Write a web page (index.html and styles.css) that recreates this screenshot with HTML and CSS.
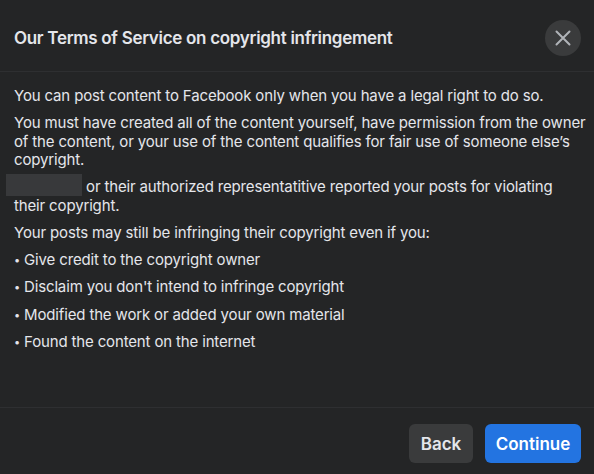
FILE: index.html
```html
<!DOCTYPE html>
<html lang="en">
<head>
    <meta charset="UTF-8">
    <meta name="viewport" content="width=device-width, initial-scale=1.0">
    <title>Copyright infringement</title>
    <link rel="stylesheet" href="styles.css">
</head>
<body>
    <div class="dialog">
        <div class="dialog-header">
            <h2>Our Terms of Service on copyright infringement</h2>
            <button class="close-button" aria-label="Close">
                <svg width="18" height="18" viewBox="0 0 18 18">
                    <path d="M2.5 2.5 L15.5 15.5 M15.5 2.5 L2.5 15.5" stroke="#b0b3b8" stroke-width="2" stroke-linecap="round" fill="none"/>
                </svg>
            </button>
        </div>

        <div class="dialog-body">
            <p>You can post content to Facebook only when you have a legal right to do so.</p>
            <p>You must have created all of the content yourself, have permission from the owner<br>of the content, or your use of the content qualifies for fair use of someone else’s<br>copyright.</p>
            <p><span class="redacted"></span> or their authorized representatitive reported your posts for violating<br>their copyright.</p>
            <p>Your posts may still be infringing their copyright even if you:</p>
            <p><span class="bullet">•</span>Give credit to the copyright owner</p>
            <p><span class="bullet">•</span>Disclaim you don't intend to infringe copyright</p>
            <p><span class="bullet">•</span>Modified the work or added your own material</p>
            <p><span class="bullet">•</span>Found the content on the internet</p>
        </div>

        <div class="dialog-footer">
            <button class="back-button">Back</button>
            <button class="continue-button">Continue</button>
        </div>
    </div>
</body>
</html>
```

FILE: styles.css
```css
body {
    margin: 0;
    background-color: #242526;
    font-family: 'Inter', 'Liberation Sans', sans-serif;
    color: #e4e6eb;
}
.dialog {
    width: 594px;
    height: 474px;
    display: flex;
    flex-direction: column;
}
.dialog-header {
    height: 72px;
    display: flex;
    align-items: center;
    justify-content: space-between;
    padding: 4px 13px 0 14px;
    box-sizing: border-box;
    border-bottom: 1px solid #2e2f31;
}
.dialog-header h2 {
    margin: 0;
    font-size: 17px;
    font-weight: 600;
    letter-spacing: -0.3px;
    color: #e4e6eb;
}
.close-button {
    width: 36px;
    height: 36px;
    border-radius: 50%;
    border: none;
    background-color: #3a3b3c;
    display: flex;
    align-items: center;
    justify-content: center;
    padding: 0;
    cursor: pointer;
}
.dialog-body {
    flex: 1;
    padding: 15px 0 0 14px;
    border-bottom: 1px solid #2e2f31;
}
.dialog-body p {
    margin: 0 0 8.7px 0;
    font-size: 15px;
    line-height: 18.5px;
    letter-spacing: -0.15px;
    white-space: nowrap;
}
.bullet {
    font-size: 11px;
    margin-right: 4px;
    vertical-align: 1px;
}
.redacted {
    display: inline-block;
    width: 76px;
    height: 22px;
    margin: -5px 0 -3px -8px;
    vertical-align: -1px;
    background-color: #38393b;
}
.dialog-footer {
    height: 66px;
    display: flex;
    justify-content: flex-end;
    align-items: flex-start;
    gap: 12px;
    padding: 16px 13px 0 0;
    box-sizing: border-box;
}
.dialog-footer button {
    height: 39px;
    border: none;
    border-radius: 6px;
    font-family: inherit;
    font-size: 17px;
    font-weight: 600;
    cursor: pointer;
}
.back-button {
    width: 64px;
    background-color: #3a3b3c;
    color: #e4e6eb;
}
.continue-button {
    width: 96px;
    background-color: #2374e1;
    color: #fff;
}
```
